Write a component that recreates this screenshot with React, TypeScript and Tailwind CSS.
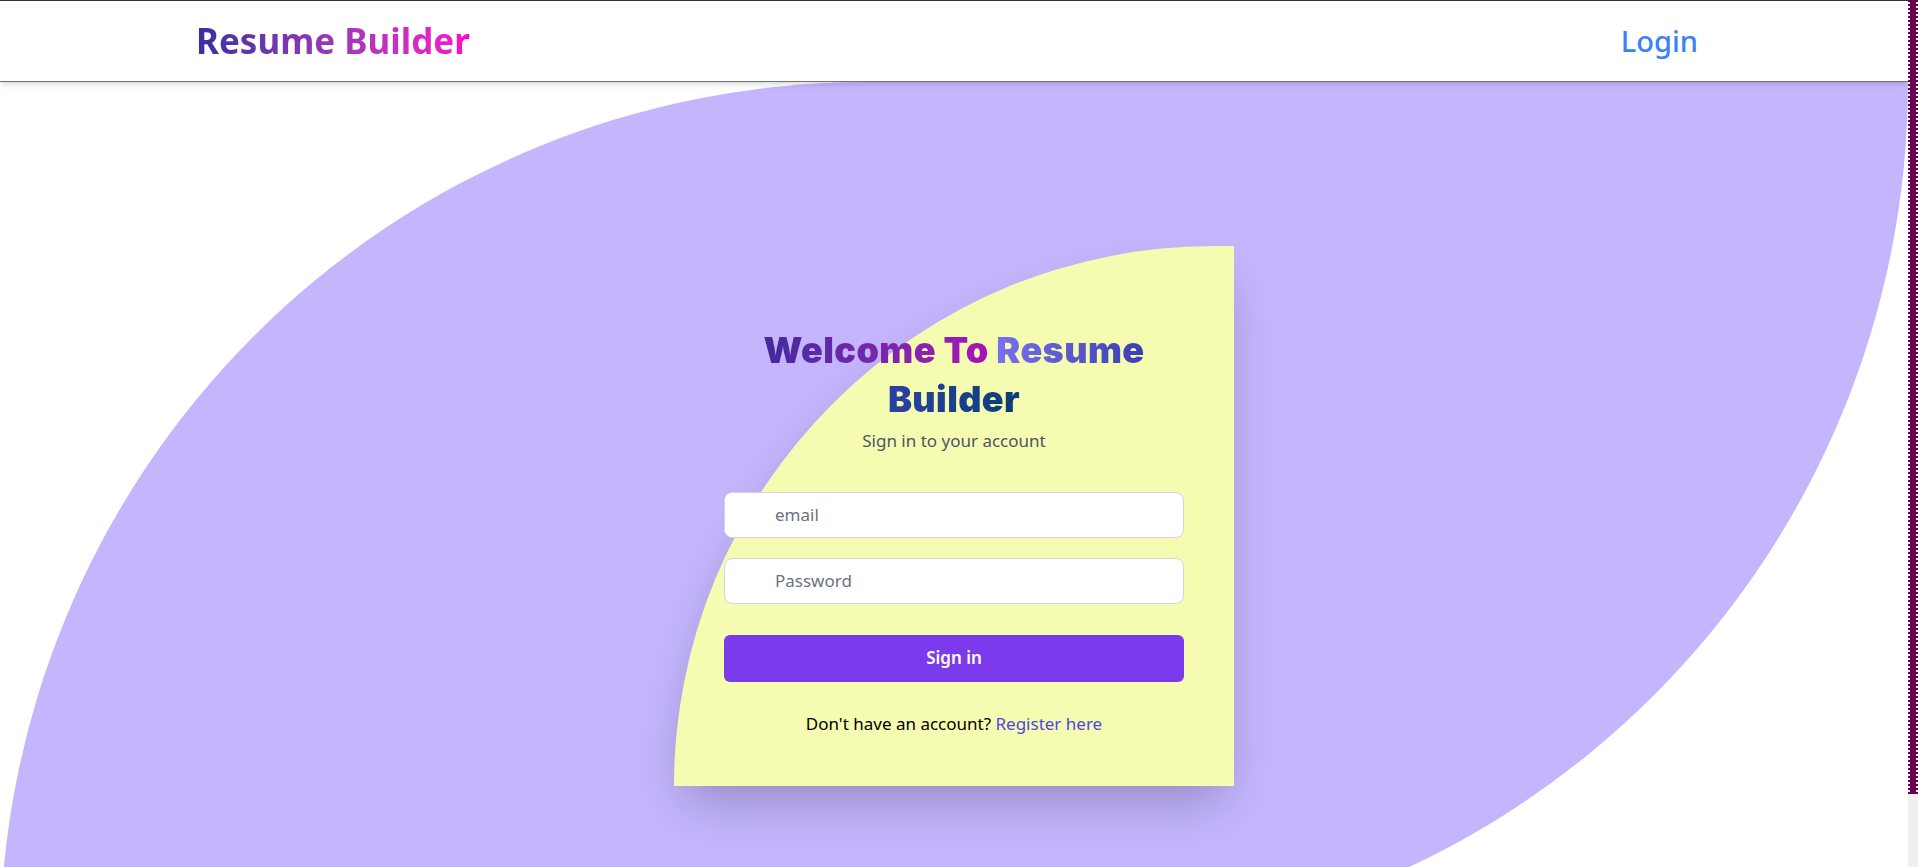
import { useState } from 'react';

const App = () => {
  const [email, setEmail] = useState('');
  const [password, setPassword] = useState('');

  return (
    <div className="flex h-screen overflow-hidden bg-white font-['Noto_Sans',sans-serif]">
      <div className="flex-1 overflow-y-auto [scrollbar-width:none]">
        <header className="relative z-10 flex h-[82px] items-center justify-between border-t border-b border-t-[#333333] border-b-[#6b7280] bg-white pl-[196px] pr-[210px] shadow-md">
          <a href="#" className="bg-linear-to-r from-[#382ea0] to-[#ff00cc] bg-clip-text text-[35px] font-bold text-transparent">
            Resume Builder
          </a>
          <a href="#" className="text-[29px] font-medium text-[#3b82f6]">
            Login
          </a>
        </header>

        {/* lavender leaf behind the card */}
        <main className="flex min-h-screen items-center justify-center rounded-tl-full rounded-br-full bg-[#c4b5fd]">
          <div className="w-[560px] rounded-tl-full bg-[#f5fcb1] px-[50px] pt-20 pb-12 shadow-2xl">
            <h1 className="text-center font-['Inter',sans-serif] text-[36px] leading-[49px] font-black tracking-[0.4px]">
              <span className="bg-linear-to-r from-[#43299e] to-[#a90db8] bg-clip-text text-transparent">Welcome To</span>{' '}
              <span className="bg-linear-to-r from-[#7b70f0] to-[#3a3fb0] bg-clip-text text-transparent">Resume</span>{' '}
              <span className="bg-linear-to-r from-[#2a41a6] to-[#083d75] bg-clip-text text-transparent">Builder</span>
            </h1>
            <p className="mt-[3px] text-center text-[17px] leading-7 text-[#4b5563]">Sign in to your account</p>

            <form className="mt-[37px]" onSubmit={(e) => e.preventDefault()}>
              <input
                type="email"
                value={email}
                onChange={(e) => setEmail(e.target.value)}
                placeholder="email"
                className="block h-[46px] w-full rounded-lg border border-[#d1d5db] bg-white pr-3 pl-[50px] text-[17px] text-gray-900 placeholder:text-[#6b7280] focus:outline-none"
              />
              <input
                type="password"
                value={password}
                onChange={(e) => setPassword(e.target.value)}
                placeholder="Password"
                className="mt-5 block h-[46px] w-full rounded-lg border border-[#d1d5db] bg-white pr-3 pl-[50px] text-[17px] text-gray-900 placeholder:text-[#6b7280] focus:outline-none"
              />
              <button
                type="submit"
                className="mt-[31px] h-[47px] w-full rounded-md bg-[#7c3aed] text-[17px] font-semibold text-white"
              >
                Sign in
              </button>
            </form>

            <p className="mt-7 text-center text-[17px] leading-7 text-black">
              Don't have an account?{' '}
              <a href="#" className="text-[#4f46e5]">
                Register here
              </a>
            </p>
          </div>
        </main>
      </div>

      {/* page scrollbar as it shows in the shot */}
      <div className="w-[10px] shrink-0 bg-[#f0f0f0]">
        <div className="h-[794px] border-x-2 border-dotted border-[#66004f] bg-[#66004f] bg-clip-padding" />
      </div>
    </div>
  );
};

export default App;
